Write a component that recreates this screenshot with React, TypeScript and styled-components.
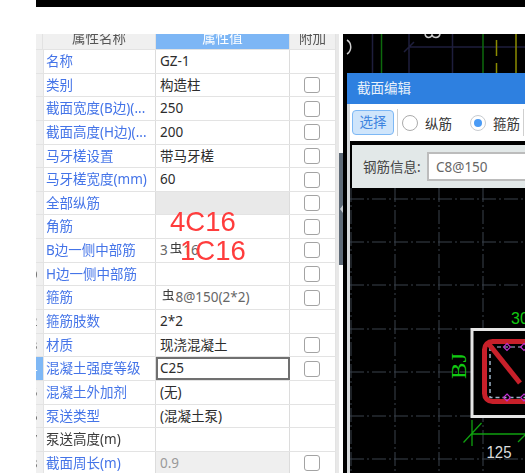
import React from "react";
import styled, { createGlobalStyle } from "styled-components";

const Global = createGlobalStyle`
  html, body { margin: 0; padding: 0; background: #fff; }
  body { width: 525px; height: 473px; overflow: hidden; font-family: "Noto Sans", "Noto Sans CJK SC", sans-serif; }
  * { box-sizing: border-box; }
`;

const Page = styled.div`
  width: 525px;
  height: 473px;
  overflow: hidden;
  display: flex;
  flex-direction: column;
  padding-left: 36px;
  filter: blur(0.3px);
`;
const TopBar = styled.div`
  height: 7px;
  flex: none;
  margin-bottom: 27px;
  background: #000;
`;
const Main = styled.div`
  flex: 1;
  min-height: 0;
  display: flex;
`;
const Panel = styled.div`
  position: relative;
  width: 300px;
  flex: none;
  overflow: hidden;
`;
const columns = "7px 113px 134px 46px";
const HeadRow = styled.div`
  display: grid;
  grid-template-columns: ${columns};
  height: 15px;
`;
const HeadCell = styled.div<{ $active?: boolean }>`
  overflow: hidden;
  background: ${(p) => (p.$active ? "#7db6f5" : "#f0f0f0")};
  color: ${(p) => (p.$active ? "#fff" : "#555")};
  font-size: 13.5px;
  line-height: 9px;
  text-align: center;
  border-right: 1px solid #e2e2e2;
`;
const Row = styled.div`
  display: grid;
  grid-template-columns: ${columns};
  height: 23.65px;
  border-top: 1.5px solid #e3e3e3;
`;
const NumCell = styled.div<{ $active?: boolean }>`
  overflow: hidden;
  background: ${(p) => (p.$active ? "#7fb8f5" : "#f0f0f0")};
  color: ${(p) => (p.$active ? "#fff" : "#555")};
  font-size: 13px;
  line-height: 22px;
`;
const NumText = styled.span`
  display: block;
  width: 16px;
  margin-left: -14px;
  text-align: center;
`;
const NameCell = styled.div<{ $plain?: boolean }>`
  padding-left: 2px;
  font-size: 13.5px;
  line-height: 22px;
  white-space: nowrap;
  overflow: hidden;
  color: ${(p) => (p.$plain ? "#3a3a3a" : "#4474e8")};
  border-left: 1px solid #e3e3e3;
  border-right: 1px solid #dcdcdc;
`;
const ValueCell = styled.div<{ $tone?: "off" | "muted" | "edit" | "rebar" }>`
  padding-left: ${(p) => (p.$tone === "edit" ? "2px" : "4px")};
  font-size: 13.5px;
  white-space: nowrap;
  color: ${(p) => (p.$tone === "muted" ? "#9a9a9a" : p.$tone === "rebar" ? "#666" : "#2c2c2c")};
  background: ${(p) => (p.$tone === "off" ? "#e9e9e9" : p.$tone === "muted" ? "#efefef" : "#fff")};
  border: ${(p) => (p.$tone === "edit" ? "2px solid #707070" : "none")};
  border-right: ${(p) => (p.$tone === "edit" ? "2px solid #707070" : "1px solid #dcdcdc")};
  line-height: ${(p) => (p.$tone === "edit" ? "19px" : "22px")};
`;
const BarMark = styled.span`
  display: inline-block;
  font-size: 12.5px;
  line-height: 12px;
  color: #3c3c3c;
  transform: translateY(-2.5px);
  margin: 0 1px 0 2px;
`;
const AddCell = styled.div`
  padding-left: 14px;
  display: flex;
  align-items: center;
  border-right: 1px solid #e3e3e3;
`;
const Check = styled.span`
  display: block;
  width: 16px;
  height: 16px;
  border: 1.5px solid #a3a3a3;
  border-radius: 3px;
  background: #fff;
`;
const FloatNote = styled.span<{ $left: number; $top: number }>`
  position: absolute;
  left: ${(p) => p.$left}px;
  top: ${(p) => p.$top}px;
  font-family: "Liberation Sans", sans-serif;
  font-size: 27.5px;
  line-height: 30px;
  color: #ff3c3c;
  white-space: nowrap;
`;
const Scroll = styled.div`
  width: 7px;
  flex: none;
  border-left: 3px solid #e8e8e8;
  background: #fff;
`;
const Thumb = styled.div`
  margin-top: 119px;
  height: 112px;
  background: #5f6b78;
  display: flex;
  align-items: center;
  justify-content: flex-end;
`;
const ThumbArrow = styled.span`
  width: 0;
  height: 0;
  border-top: 4px solid transparent;
  border-bottom: 4px solid transparent;
  border-right: 3px solid #c9ced3;
`;
const Canvas = styled.div`
  flex: 1;
  min-width: 0;
  background: #000;
  display: flex;
  flex-direction: column;
  overflow: hidden;
`;
const TopDrawing = styled.svg`
  display: block;
  flex: none;
  width: 182px;
  height: 39px;
`;
const Dialog = styled.div`
  flex: 1;
  margin-left: 4px;
  min-height: 0;
  display: flex;
  flex-direction: column;
`;
const DialogTitle = styled.div`
  height: 31px;
  flex: none;
  padding-left: 10px;
  background: #2e80e0;
  color: #e8f1fb;
  font-size: 13.5px;
  line-height: 31px;
`;
const DialogBody = styled.div`
  flex: 1;
  min-height: 0;
  border-left: 3px solid #d5d8da;
  display: flex;
  flex-direction: column;
`;
const Toolbar = styled.div`
  height: 37px;
  flex: none;
  background: #fff;
  display: flex;
  align-items: center;
  padding-left: 2px;
  white-space: nowrap;
`;
const ToolButton = styled.div`
  width: 42px;
  height: 25px;
  flex: none;
  background: #cfe5fb;
  border: 1.5px solid #7db8f5;
  border-radius: 4px;
  color: #3d84e0;
  font-size: 13.5px;
  line-height: 22px;
  text-align: center;
`;
const ToolDivider = styled.span<{ $gap: number }>`
  width: 1px;
  height: 27px;
  flex: none;
  margin-left: ${(p) => p.$gap}px;
  background: #cfcfcf;
`;
const Radio = styled.span<{ $on?: boolean; $gap: number }>`
  width: 16px;
  height: 16px;
  flex: none;
  margin-left: ${(p) => p.$gap}px;
  border-radius: 50%;
  border: 1.5px solid ${(p) => (p.$on ? "#c8ccd0" : "#ababab")};
  background: #fff;
  display: flex;
  align-items: center;
  justify-content: center;
  &::after {
    content: "";
    width: 8px;
    height: 8px;
    border-radius: 50%;
    background: ${(p) => (p.$on ? "#4a9bf5" : "transparent")};
  }
`;
const RadioLabel = styled.span`
  margin-left: 7px;
  width: 27px;
  flex: none;
  color: #333;
  font-size: 13.5px;
`;
const InfoBox = styled.div`
  height: 47px;
  flex: none;
  border: solid #000;
  border-width: 4px 0 0 2px;
  background: #e2e8e8;
  display: flex;
  align-items: flex-start;
  padding: 7px 0 0 11px;
  white-space: nowrap;
`;
const InfoLabel = styled.span`
  flex: none;
  width: 64px;
  color: #444;
  font-size: 13.5px;
  line-height: 31px;
`;
const InfoInput = styled.div`
  flex: none;
  width: 200px;
  height: 29px;
  padding-left: 7px;
  border: 2px solid #bcbcbc;
  background: #fff;
  color: #666;
  font-size: 13.5px;
  line-height: 26px;
`;
const Drawing = styled.svg`
  display: block;
  flex: none;
  width: 175px;
  height: 285px;
`;

type Tone = "off" | "muted" | "edit" | "rebar";
type Item = { name: string; value?: React.ReactNode; check?: boolean; tone?: Tone; plain?: boolean; active?: boolean };

const items: Item[] = [
  { name: "名称", value: "GZ-1" },
  { name: "类别", value: "构造柱", check: true },
  { name: "截面宽度(B边)(...", value: "250", check: true },
  { name: "截面高度(H边)(...", value: "200", check: true },
  { name: "马牙槎设置", value: "带马牙槎", check: true },
  { name: "马牙槎宽度(mm)", value: "60", check: true },
  { name: "全部纵筋", check: true, tone: "off" },
  { name: "角筋", check: true },
  { name: "B边一侧中部筋", value: <>3<BarMark>虫</BarMark>16</>, check: true, tone: "rebar" },
  { name: "H边一侧中部筋", check: true },
  { name: "箍筋", value: <><BarMark>虫</BarMark>8@150(2*2)</>, check: true, tone: "rebar" },
  { name: "箍筋肢数", value: "2*2" },
  { name: "材质", value: "现浇混凝土", check: true },
  { name: "混凝土强度等级", value: "C25", check: true, tone: "edit", active: true },
  { name: "混凝土外加剂", value: "(无)" },
  { name: "泵送类型", value: "(混凝土泵)" },
  { name: "泵送高度(m)", plain: true },
  { name: "截面周长(m)", value: "0.9", check: true, tone: "muted" },
];

const gridX = [351, 395, 439, 483];
const gridY = [199, 242, 285, 329, 372, 416, 459];
const bars: [number, number][] = [[507, 347], [524, 347], [507, 397.5], [524, 397.5]];

export default function App() {
  return (
    <Page>
      <Global />
      <TopBar />
      <Main>
        <Panel>
          <HeadRow>
            <HeadCell />
            <HeadCell>属性名称</HeadCell>
            <HeadCell $active>属性值</HeadCell>
            <HeadCell>附加</HeadCell>
          </HeadRow>
          {items.map((it, i) => (
            <Row key={it.name}>
              <NumCell $active={it.active}><NumText>{i + 1}</NumText></NumCell>
              <NameCell $plain={it.plain}>{it.name}</NameCell>
              <ValueCell $tone={it.tone}>{it.value}</ValueCell>
              <AddCell>{it.check && <Check />}</AddCell>
            </Row>
          ))}
          <FloatNote $left={134} $top={173}>4C16</FloatNote>
          <FloatNote $left={144} $top={202}>1C16</FloatNote>
        </Panel>
        <Scroll>
          <Thumb><ThumbArrow /></Thumb>
        </Scroll>
        <Canvas>
          <TopDrawing viewBox="343 34 182 39">
            <g strokeWidth="1.5" fill="none">
              <path d="M372.5 34V73M409 34V73M452.5 34V73M409 47H525M404 52L414 42" stroke="#1e1e3c" />
              <path d="M381.5 34V73M483 34V73" stroke="#0d6a0d" />
              <path d="M496.5 40V56M496.5 63V73" stroke="#8c8c00" />
              <path d="M516 34V73" stroke="#8c8c00" />
              <path d="M347 40C352 43 352 51 347 54" stroke="#cfcfcf" />
              <path d="M425 34C426 39 431 38 432 35C433 38 439 39 440 34" stroke="#cfcfcf" />
            </g>
          </TopDrawing>
          <Dialog>
            <DialogTitle>截面编辑</DialogTitle>
            <DialogBody>
              <Toolbar>
                <ToolButton>选择</ToolButton>
                <ToolDivider $gap={3} />
                <Radio $gap={4} />
                <RadioLabel>纵筋</RadioLabel>
                <Radio $on $gap={18} />
                <RadioLabel>箍筋</RadioLabel>
                <ToolDivider $gap={3} />
              </Toolbar>
              <InfoBox>
                <InfoLabel>钢筋信息:</InfoLabel>
                <InfoInput>C8@150</InfoInput>
              </InfoBox>
              <Drawing viewBox="350 188 175 285">
                <g stroke="#3a434d" strokeWidth="1" strokeDasharray="14 3 2 3" fill="none">
                  {gridX.map((x) => <line key={x} x1={x} y1={188} x2={x} y2={473} />)}
                  {gridY.map((y) => <line key={y} x1={350} y1={y} x2={525} y2={y} />)}
                </g>
                <rect x="472" y="329.5" width="90" height="87" fill="#000" stroke="#e6e6e6" strokeWidth="3" />
                <path d="M490 347V397.5H530" stroke="#9fb4c8" strokeWidth="1.5" strokeDasharray="4 3" fill="none" />
                <path d="M490 347H530" stroke="#b8b8e0" strokeWidth="1" strokeDasharray="4 3" fill="none" />
                <rect x="484.5" y="341.5" width="80" height="60" rx="8" fill="none" stroke="#c8202a" strokeWidth="5" />
                <path d="M488 343L520 383" stroke="#c8202a" strokeWidth="5" />
                {bars.map(([x, y]) => (
                  <path key={x + "-" + y} d={`M${x} ${y - 3.5}L${x + 3.5} ${y}L${x} ${y + 3.5}L${x - 3.5} ${y}Z`} fill="none" stroke="#c030d0" strokeWidth="1.2" />
                ))}
                <text x="511" y="324" fill="#12c912" fontSize="16" fontFamily="Liberation Sans, sans-serif">30</text>
                <text transform="translate(466 379) rotate(-90)" fill="#12c912" fontSize="20" fontFamily="Liberation Serif, serif" textLength="26" lengthAdjust="spacingAndGlyphs">BJ</text>
                <path d="M472 434H525M472 420V446M463.5 442.5L481.5 423M518 442L525 435" stroke="#0fa00f" strokeWidth="1.3" fill="none" />
                <text x="486.5" y="458" fill="#dcdcdc" fontSize="17" fontFamily="Liberation Sans, sans-serif" textLength="25" lengthAdjust="spacingAndGlyphs">125</text>
              </Drawing>
            </DialogBody>
          </Dialog>
        </Canvas>
      </Main>
    </Page>
  );
}
